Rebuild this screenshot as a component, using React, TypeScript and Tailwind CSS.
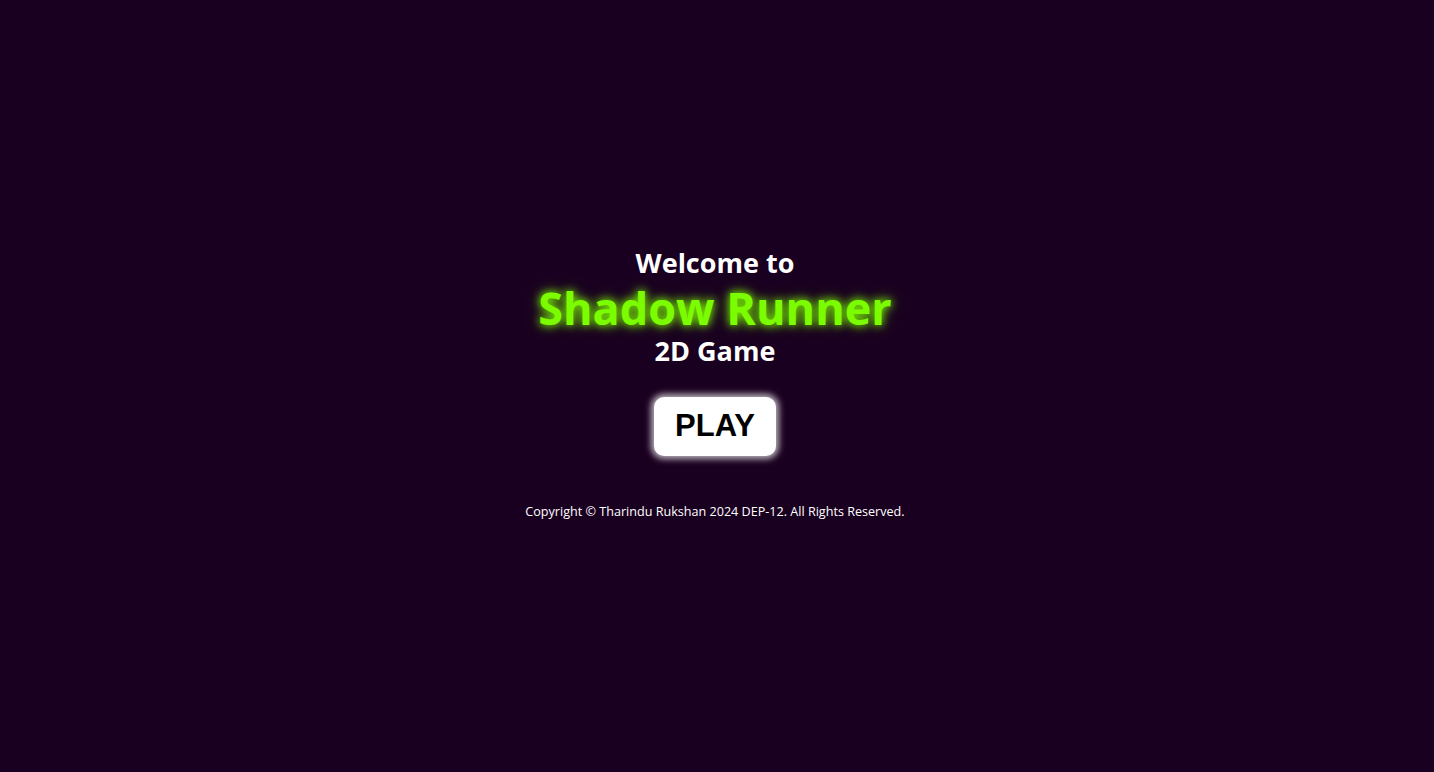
export default function App() {
  return (
    <div
      className="min-h-screen w-full bg-[#1a0020] flex flex-col items-center justify-center pr-[4px] pb-[4px] text-white"
      style={{ fontFamily: '"Open Sans", "Noto Sans", sans-serif' }}
    >
      <h1 className="flex flex-col items-center font-bold">
        <span className="text-[27px] leading-[30px]">Welcome to</span>
        <span className="text-[45px] leading-[60px] text-[#7cfc00] [text-shadow:0_0_8px_#7cfc00,0_0_14px_rgba(124,252,0,0.6)]">
          Shadow Runner
        </span>
        <span className="text-[27px] leading-[26px]">2D Game</span>
      </h1>

      <button className="mt-[33px] w-[122px] h-[59px] rounded-[10px] bg-white text-black text-[31px] font-bold shadow-[0_0_6px_3px_rgba(255,255,255,0.7)] font-['Liberation_Sans',sans-serif]">
        PLAY
      </button>

      <p className="mt-[48px] text-[12.6px] leading-[16px] text-white">
        Copyright © Tharindu Rukshan 2024 DEP-12. All Rights Reserved.
      </p>
    </div>
  )
}
